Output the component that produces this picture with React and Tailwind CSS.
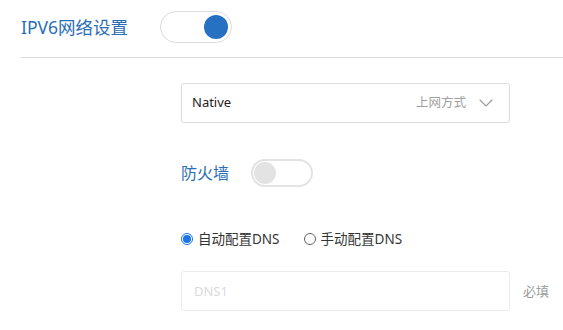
import { ChevronDown } from 'lucide-react'

const FONT = { fontFamily: '"Noto Sans", "Noto Sans CJK SC", sans-serif' }

function Toggle({ on, big }) {
  return big ? (
    <div className="w-[72px] h-[32px] rounded-full border border-[#dcdcdc] bg-white flex items-center justify-end pr-[3px]">
      <div className={`w-[24px] h-[24px] rounded-full ${on ? 'bg-[#2671c2]' : 'bg-[#e3e3e3]'}`} />
    </div>
  ) : (
    <div className="w-[62px] h-[28px] rounded-full border-2 border-[#e3e3e3] bg-white flex items-center pl-[1px]">
      <div className="w-[22px] h-[22px] rounded-full bg-[#e3e3e3]" />
    </div>
  )
}

function Radio({ checked, label }) {
  return (
    <label className="flex items-center gap-[5px] text-[13.5px] text-[#333]">
      {checked ? (
        <span className="w-[12px] h-[12px] rounded-full border border-[#1a73e8] flex items-center justify-center">
          <span className="w-[8px] h-[8px] rounded-full bg-[#1a73e8]" />
        </span>
      ) : (
        <span className="w-[12px] h-[12px] rounded-full border border-[#666] bg-white" />
      )}
      <span>{label}</span>
    </label>
  )
}

export default function App() {
  return (
    <div className="w-[563px] h-[330px] bg-white overflow-hidden" style={FONT}>
      <div className="pl-[21px]">
        <div className="flex items-center h-[32px] mt-[11px]">
          <span className="text-[17.5px] text-[#2a6eb8] w-[139px]">IPV6网络设置</span>
          <Toggle on big />
        </div>
        <div className="h-px bg-[#d8d8d8] mt-[14px]" />
      </div>

      <div className="pl-[181px] pt-[25px]">
        <div className="w-[329px] h-[40px] border border-[#dcdcdc] rounded-[3px] flex items-center pl-[10px] pr-[11px]">
          <span className="text-[13px] text-[#222] flex-1">Native</span>
          <span className="text-[12.5px] text-[#a0a0a0] mr-[8px]">上网方式</span>
          <ChevronDown size={24} strokeWidth={1.1} className="text-[#9a9a9a]" />
        </div>

        <div className="flex items-center mt-[36px] h-[28px]">
          <span className="text-[16px] text-[#2a6eb8] w-[70px]">防火墙</span>
          <Toggle />
        </div>

        <div className="flex items-center gap-[24px] mt-[42px]">
          <Radio checked label="自动配置DNS" />
          <Radio label="手动配置DNS" />
        </div>

        <div className="flex items-center mt-[22px]">
          <div className="w-[329px] h-[40px] border border-[#ececec] rounded-[3px] flex items-center pl-[12px]">
            <span className="text-[13px] text-[#dadada]">DNS1</span>
          </div>
          <span className="ml-[13px] text-[13px] text-[#9a9a9a]">必填</span>
        </div>
      </div>
    </div>
  )
}
